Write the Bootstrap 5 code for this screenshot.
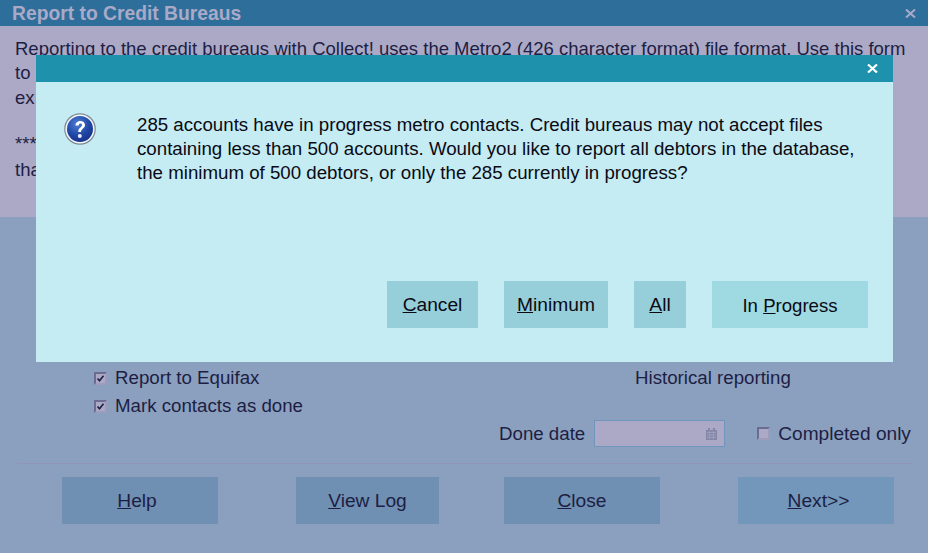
<!DOCTYPE html>
<html lang="en"><head><meta charset="utf-8"><title>Report to Credit Bureaus</title>
<link href="https://cdn.jsdelivr.net/npm/bootstrap@5.3.0/dist/css/bootstrap.min.css" rel="stylesheet">
<style>
html,body{height:553px;overflow:hidden}
body{font-family:"Liberation Sans",Arial,sans-serif;font-size:18.7px;color:#1d1e44;background:#8ba0be;position:relative;line-height:24px}
.app-title{height:26px;background:#2e6e9a;color:#a9a9c8;font-weight:700;font-size:19.3px;padding:0 12px 0 12px;line-height:27px}
.x-mark{display:block}
.intro{height:191px;background:#aba9c6;padding:11px 15px 0;font-size:18.5px}
.intro p{margin:0;height:24.4px}
.intro p.spaced{margin-top:22px}
.intro p.last{margin-top:1px}
.lower{height:336px;padding-top:148px;position:relative}
.opts{padding-left:94px;width:635px;flex:none;margin-top:-1px}
.opt-row{height:28px}
.tick{appearance:none;width:13px;height:13px;margin:0;flex:none;border:2px solid #6b6c92;border-right-color:#9c9dbc;border-bottom-color:#9c9dbc;background:#aba9c6;border-radius:0}
.tick:checked{background:#aba9c6 url("data:image/svg+xml,%3Csvg xmlns='http://www.w3.org/2000/svg' viewBox='0 0 9 9'%3E%3Cpath d='M1.500 4.500l2 2.200 4-5' fill='none' stroke='%231d1e44' stroke-width='1.600'/%3E%3C/svg%3E") center/9px no-repeat}
.hist{margin-top:1px}
.date-row{padding-left:499px;height:27px;margin-top:0}
.date-box{width:131px;height:27px;margin-left:9px;margin-right:32px;background:#aba9c6;border:1px solid #6f97bd;padding-right:7px}
.done-lab{font-size:19.1px}
.rule{height:1px;background:#8f94b8;margin:16px 16px 13px 17px}
.foot{padding-left:62px;width:894px}
.act{height:47px;background:#6f8fb3;color:#1d1e44;font-size:19.2px;border:0;border-radius:0;padding:2px 0 0}
.act:hover{background:#6f8fb3;color:#1d1e44}
.w156{width:156px}.w143{width:143px}
.ms78{margin-left:78px}.ms65{margin-left:65px}
.act-help{padding-right:6px}
.act-next,.act-next:hover{background:#7297ba;padding-left:5px}
.dlg{position:absolute;left:36px;top:55px;width:857px;height:307px;background:#c5ebf3;color:#0a0a14}
.dlg-head{height:27px;background:#1e92ac;padding-right:15px}
.dlg-body{padding:31px 20px 0 28px;height:199px}
.dlg-text{margin:0 0 0 41px;line-height:24px}
.dlg-foot{padding-right:25px;gap:26px}
.dbtn{height:47px;background:#96ced9;color:#0a0a14;font-size:19.2px;border:0;border-radius:0;padding:2px 0 0}
.dbtn:hover{background:#96ced9;color:#0a0a14}
.dbtn-main,.dbtn-main:hover{background:#9fd9e2;font-size:18.6px}
.w91{width:91px}.w104{width:104px}.w52{width:52px}
</style></head><body>
<div class="app-title d-flex justify-content-between align-items-center"><span>Report to Credit Bureaus</span>
<svg class="x-mark" width="11" height="9" viewBox="0 0 11 9"><path d="M1 .5l9 8M10 .5l-9 8" stroke="#a9a9c8" stroke-width="2"/></svg></div>
<div class="intro">
<p>Reporting to the credit bureaus with Collect! uses the Metro2 (426 character format) file format. Use this form</p>
<p>to</p><p>ex</p><p class="spaced">***</p><p class="last">tha</p>
</div>
<div class="lower">
<div class="d-flex">
<div class="opts">
<label class="opt-row d-flex align-items-center gap-2"><input class="tick" type="checkbox" checked>Report to Equifax</label>
<label class="opt-row d-flex align-items-center gap-2"><input class="tick" type="checkbox" checked>Mark contacts as done</label>
</div>
<div class="hist">Historical reporting</div>
</div>
<div class="date-row d-flex align-items-center">Done date
<div class="date-box d-flex align-items-center justify-content-end"><svg width="11" height="12" viewBox="0 0 11 12"><path d="M0 2h11v10H0z" fill="#8487a8"/><path d="M2 0h2v2H2zM7 0h2v2H7z" fill="#8487a8"/><path d="M1 4.500h9M1 7h9M1 9.500h9M3.700 3v8M7.300 3v8" stroke="#a3a3c0" stroke-width=".8"/></svg></div>
<label class="done-lab d-flex align-items-center gap-2"><input class="tick" type="checkbox">Completed only</label>
</div>
<div class="rule"></div>
<div class="foot d-flex">
<button class="btn act act-help w156"><u>H</u>elp</button>
<button class="btn act w143 ms78"><u>V</u>iew Log</button>
<button class="btn act w156 ms65"><u>C</u>lose</button>
<button class="btn act act-next w156 ms78"><u>N</u>ext&gt;&gt;</button>
</div>
</div>
<div class="dlg">
<div class="dlg-head d-flex justify-content-end align-items-center">
<svg class="x-mark" width="11" height="9" viewBox="0 0 11 9"><path d="M1 .5l9 8M10 .5l-9 8" stroke="#fff" stroke-width="2.200"/></svg></div>
<div class="dlg-body d-flex align-items-start">
<svg class="flex-shrink-0" width="32" height="32" viewBox="0 0 32 32"><defs><radialGradient id="g" cx="40%" cy="30%" r="75%"><stop offset="0" stop-color="#4f7fd6"/><stop offset=".6" stop-color="#1f47a5"/><stop offset="1" stop-color="#17308a"/></radialGradient></defs><circle cx="16" cy="16" r="15.200" fill="#f2f6f8" stroke="#7d8a96" stroke-width="1.200"/><circle cx="16" cy="16" r="13" fill="url(#g)"/><path d="M11.500 12.500c0-6 9.500-6 9.500-.5 0 3.500-4 3.500-4 7h-2.800c0-4.500 3.800-4.500 3.800-7 0-2-3.300-2-3.300.5z" fill="#fff"/><circle cx="15.800" cy="23" r="2" fill="#eef"/></svg>
<p class="dlg-text">285 accounts have in progress metro contacts. Credit bureaus may not accept files containing less than 500 accounts. Would you like to report all debtors in the database, the minimum of 500 debtors, or only the 285 currently in progress?</p>
</div>
<div class="dlg-foot d-flex justify-content-end">
<button class="btn dbtn w91"><u>C</u>ancel</button>
<button class="btn dbtn w104"><u>M</u>inimum</button>
<button class="btn dbtn w52"><u>A</u>ll</button>
<button class="btn dbtn dbtn-main w156">In <u>P</u>rogress</button>
</div>
</div>
<script src="https://cdn.jsdelivr.net/npm/bootstrap@5.3.0/dist/js/bootstrap.bundle.min.js"></script>
</body></html>
